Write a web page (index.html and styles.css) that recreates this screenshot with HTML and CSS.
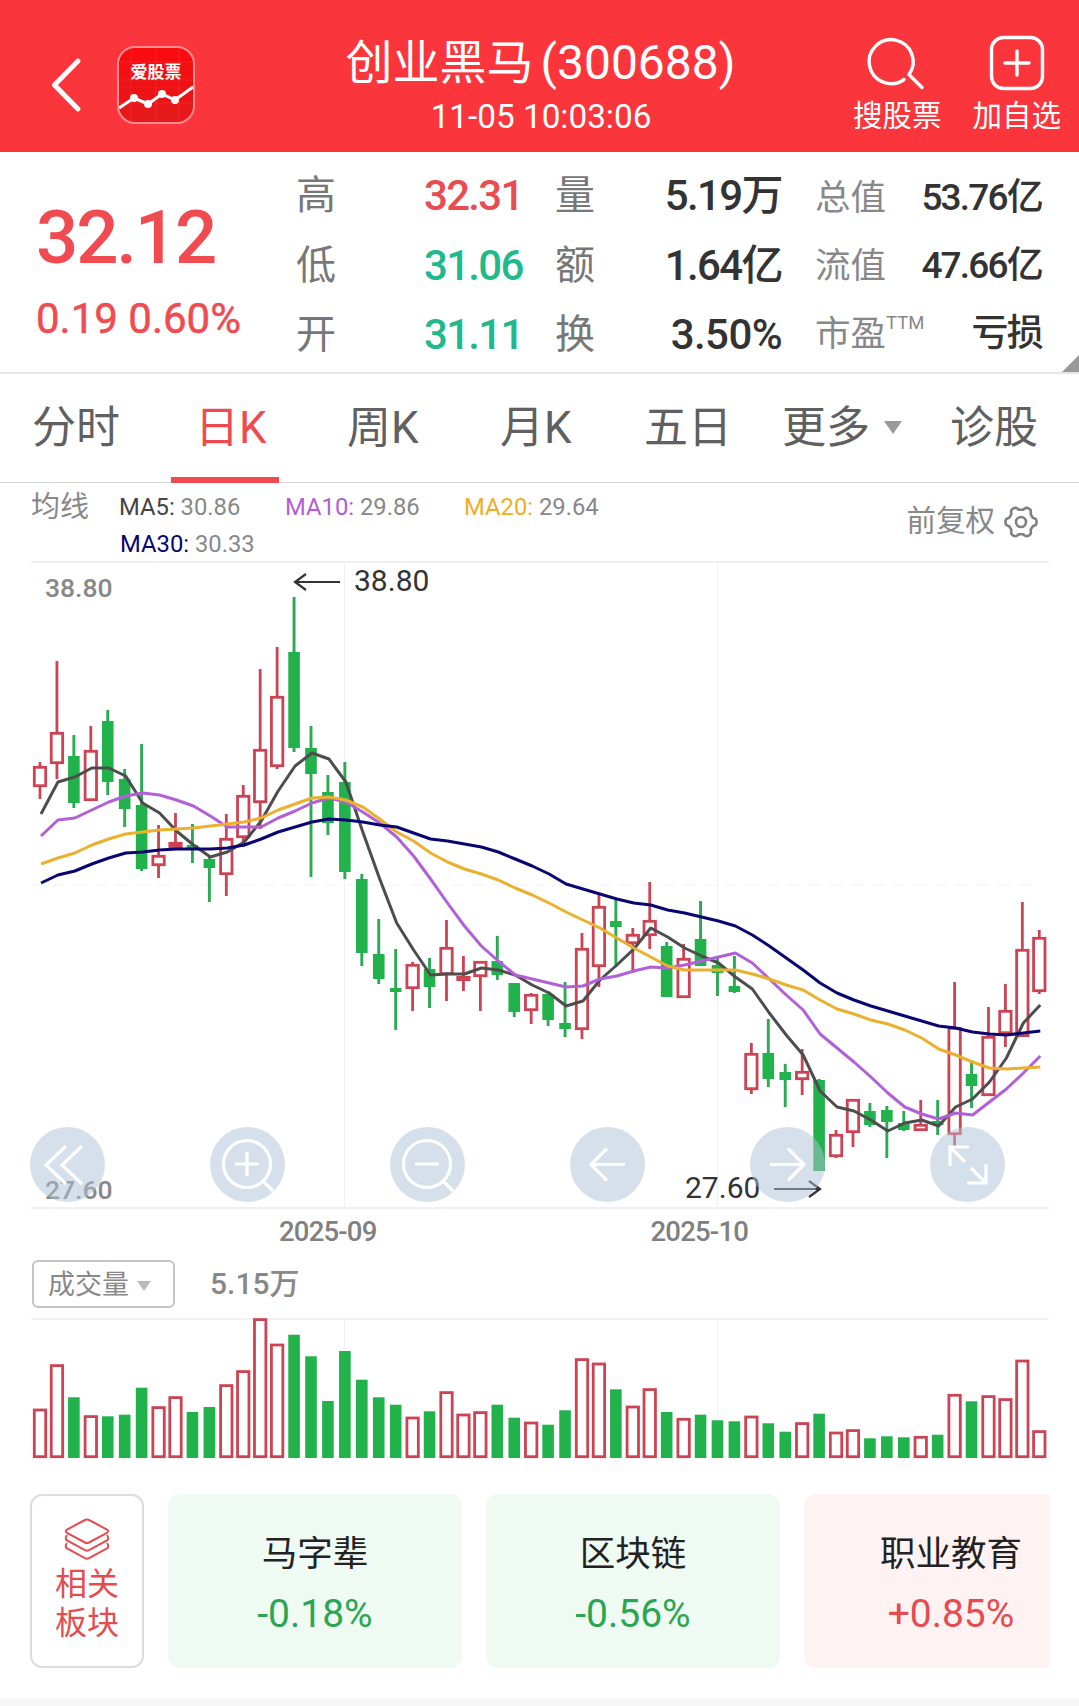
FILE: index.html
```html
<!DOCTYPE html>
<html lang="zh-CN">
<head>
  <meta charset="UTF-8">
  <meta name="viewport" content="width=device-width, initial-scale=1.0">
  <title>创业黑马(300688)</title>
  <link rel="stylesheet" href="styles.css">
</head>
<body>
  <header class="topbar">
    <div class="topbar-left">
      <svg class="back" width="30" height="56" viewBox="0 0 30 56"><path d="M26 4 L2.500 28 L26 52"/></svg>
      <div class="logo">
        <span>爱股票</span>
        <svg viewBox="0 0 74 74">
          <g class="logo-grid"><path d="M12 0V74M37 0V74M60 0V74M0 14H74M0 32H74M0 55H74"/></g>
          <path class="logo-line" d="M0 60 L15 50 L29 56 L43 46 L56 52 L74 39"/>
          <circle cx="15" cy="50" r="4"/><circle cx="29" cy="56" r="4"/><circle cx="43" cy="46" r="4"/><circle cx="56" cy="52" r="4"/>
        </svg>
      </div>
    </div>
    <div class="title">
      <h1>创业黑马<span>(300688)</span></h1>
      <p>11-05 10:03:06</p>
    </div>
    <div class="topbar-right">
      <a class="action">
        <svg width="56" height="56" viewBox="0 0 56 56"><path d="M35 44.500 A22 22 0 1 1 40 39.500 L53 52.500"/></svg>
        <span>搜股票</span>
      </a>
      <a class="action">
        <svg width="56" height="56" viewBox="0 0 56 56"><rect x="2.500" y="2.500" width="51" height="51" rx="12"/><path d="M28 16V40M16 28H40"/></svg>
        <span>加自选</span>
      </a>
    </div>
  </header>

  <section class="quote">
    <div class="price">
      <div class="last">32.12</div>
      <div class="change">0.19 0.60%</div>
    </div>
    <dl class="col col-a">
      <dt>高</dt><dd class="up">32.31</dd>
      <dt>低</dt><dd class="down">31.06</dd>
      <dt>开</dt><dd class="down">31.11</dd>
    </dl>
    <dl class="col col-b">
      <dt>量</dt><dd>5.19万</dd>
      <dt>额</dt><dd>1.64亿</dd>
      <dt>换</dt><dd class="wide">3.50%</dd>
    </dl>
    <dl class="col col-c">
      <dt>总值</dt><dd>53.76亿</dd>
      <dt>流值</dt><dd>47.66亿</dd>
      <dt>市盈<sup>TTM</sup></dt><dd>亏损</dd>
    </dl>
    <i class="corner"></i>
  </section>

  <nav class="tabs">
    <a>分时</a>
    <a class="active">日K</a>
    <a>周K</a>
    <a>月K</a>
    <a>五日</a>
    <a>更多<i class="caret"></i></a>
    <a>诊股</a>
  </nav>

  <section class="legend">
    <span class="legend-name">均线</span>
    <div class="ma-list">
      <span class="ma5"><b>MA5:</b> 30.86</span>
      <span class="ma10"><b>MA10:</b> 29.86</span>
      <span class="ma20"><b>MA20:</b> 29.64</span>
      <span class="ma30"><b>MA30:</b> 30.33</span>
    </div>
    <div class="adjust">
      <span>前复权</span>
      <svg width="34" height="34" viewBox="0 0 34 34">
        <path id="gear"/>
        <circle cx="17" cy="17" r="5"/>
      </svg>
    </div>
  </section>

  <section class="kline">
    <svg id="kline" width="1019" height="649" viewBox="30 561 1019 649"></svg>
    <div class="tools">
      <button><svg viewBox="0 0 75 75"><path d="M36 19 L16 38 L36 57M52 19 L32 38 L52 57"/></svg></button>
      <button><svg viewBox="0 0 75 75"><circle cx="37" cy="37" r="23.500"/><path d="M37 25V49M25 37H49M53 54 L63 64"/></svg></button>
      <button><svg viewBox="0 0 75 75"><circle cx="37" cy="37" r="23.500"/><path d="M25 37H49M53 54 L63 64"/></svg></button>
      <button><svg viewBox="0 0 75 75"><path d="M55 37.500H21M37 21.500 L21 37.500 L37 53.500"/></svg></button>
      <button><svg viewBox="0 0 75 75"><path d="M20 37.500H54M38 21.500 L54 37.500 L38 53.500"/></svg></button>
      <button><svg viewBox="0 0 75 75"><path d="M20 39V20H39M21 21 L35 35M56 37V56H37M55 55 L41 41"/></svg></button>
    </div>
  </section>
  <div class="dates"><span>2025-09</span><span>2025-10</span></div>

  <section class="volume-head">
    <div class="select">成交量<i class="caret"></i></div>
    <span>5.15万</span>
  </section>
  <svg class="volume" id="volume" width="1019" height="142" viewBox="30 0 1019 142"></svg>

  <section class="boards">
    <div class="board board-title">
      <svg width="46" height="42" viewBox="0 0 46 42">
        <path d="M21 2 Q23 1 25 2 L43 11.500 Q45.500 13 43 14.800 L25 24.500 Q23 25.500 21 24.500 L3 14.800 Q.500 13 3 11.500 Z"/>
        <path d="M3 17 Q.500 20.500 3 22.500 L21 32.200 Q23 33.200 25 32.200 L43 22.500 Q45.500 20.500 43 17"/>
        <path d="M3 25 Q.500 28.500 3 30.500 L21 40.200 Q23 41.200 25 40.200 L43 30.500 Q45.500 28.500 43 25"/>
      </svg>
      <span>相关<br>板块</span>
    </div>
    <div class="board fall"><h3>马字辈</h3><p>-0.18%</p></div>
    <div class="board fall"><h3>区块链</h3><p>-0.56%</p></div>
    <div class="board rise"><h3>职业教育</h3><p>+0.85%</p></div>
  </section>
  <footer class="strip"></footer>

  <script src="chart.js"></script>
</body>
</html>
```
FILE: styles.css
```css
* {
  box-sizing: border-box;
}

body {
  margin: 0;
  width: 1079px;
  height: 1706px;
  overflow: hidden;
  background: #fff;
  color: #333;
  font-family: Roboto, "Noto Sans CJK SC", sans-serif;
  display: flex;
  flex-direction: column;
}

h1, h3, p, dl, dd {
  margin: 0;
  font-weight: 400;
}

svg {
  display: block;
  fill: none;
}

/* top bar */
.topbar {
  height: 152px;
  flex: none;
  background: #fa353b;
  color: #fff;
  display: grid;
  grid-template-columns: 1fr auto 1fr;
}

.topbar-left {
  display: flex;
  align-items: center;
  gap: 35px;
  padding: 18px 0 0 52px;
}

.back {
  stroke: #fff;
  stroke-width: 4.8;
  stroke-linecap: round;
}

.logo {
  width: 78px;
  height: 78px;
  border: 2px solid #ff8d8f;
  border-radius: 18px;
  background: linear-gradient(#fa0a0e, #e31a1d);
  display: grid;
  overflow: hidden;
}

.logo > * {
  grid-area: 1 / 1;
}

.logo span {
  justify-self: center;
  font-size: 17px;
  font-weight: 700;
  line-height: 17px;
  padding-top: 16px;
}

.logo svg {
  width: 74px;
  height: 74px;
}

.logo circle {
  fill: #fff;
}

.logo-grid {
  stroke: #ff4a4a;
  stroke-opacity: .3;
}

.logo-line {
  stroke: #fff;
  stroke-width: 3;
}

.title {
  text-align: center;
}

.title h1 {
  font-size: 47px;
  line-height: 56px;
  padding: 35px 0 0 2px;
}

.title h1 span {
  font-size: 48px;
  margin-left: 7px;
}

.title p {
  font-size: 33.3px;
  line-height: 40px;
  padding: 6px 0 0 3px;
}

.topbar-right {
  display: flex;
  justify-content: flex-end;
  gap: 31px;
  padding: 35px 18px 0 0;
}

.action {
  display: flex;
  flex-direction: column;
  align-items: center;
  font-size: 29.5px;
  line-height: 40px;
}

.action svg {
  stroke: #fff;
  stroke-width: 3.4;
  stroke-linecap: round;
  overflow: visible;
}

.action span {
  padding-top: 5px;
}

/* quote */
.quote {
  height: 222px;
  flex: none;
  position: relative;
  border-bottom: 2px solid #e6e6e6;
  display: flex;
  padding-left: 36px;
}

.price {
  width: 260px;
  color: #f04b50;
  font-weight: 500;
  padding-top: 46px;
}

.last {
  font-size: 74.5px;
  line-height: 80px;
  letter-spacing: -2.2px;
}

.change {
  font-size: 42px;
  line-height: 50px;
  padding-top: 16px;
  font-weight: 400;
  -webkit-text-stroke: .5px;
}

.col {
  display: grid;
  grid-template-columns: auto 1fr;
  grid-auto-rows: 69.5px;
  line-height: 69.5px;
  padding-top: 9px;
}

.col dt {
  color: #777;
  font-size: 40px;
}

.col dd {
  font-size: 42px;
  font-weight: 500;
  letter-spacing: -1.2px;
  text-align: right;
  white-space: nowrap;
}

.col-a {
  width: 230px;
}

.col-a dd {
  text-align: left;
  padding-left: 88px;
  letter-spacing: -1.7px;
}

.col-b {
  width: 227px;
  margin-left: 29px;
}

.col-b dd {
  letter-spacing: -1.6px;
}

.col-b .wide {
  letter-spacing: -.6px;
}

.col-c {
  width: 227px;
  margin-left: 33px;
  grid-template-columns: 90px 1fr;
  grid-auto-rows: 68px;
  line-height: 68px;
  padding-top: 12px;
}

.col-c dt {
  font-size: 35.5px;
  color: #888;
  white-space: nowrap;
}

.col-c dd {
  font-size: 37px;
  letter-spacing: -1.8px;
}

.col-c sup {
  font-size: 18.5px;
  line-height: 0;
  vertical-align: 17px;
}

.up {
  color: #e84d52;
}

.down {
  color: #1fb98b;
}

.corner {
  position: absolute;
  right: 0;
  bottom: 0;
  border-left: 17px solid transparent;
  border-bottom: 17px solid #999;
}

/* tabs */
.tabs {
  height: 109px;
  flex: none;
  border-bottom: 1px solid #d8d8d8;
  display: grid;
  grid-template-columns: 163px 152px 153px 144px 138px 168px 1fr;
  padding-left: 32px;
  font-size: 44px;
  line-height: 109px;
  color: #606060;
}

.tabs a {
  position: relative;
}

.tabs .active {
  color: #ee4b50;
}

.tabs .active::after {
  content: "";
  position: absolute;
  left: -24px;
  bottom: 0;
  width: 108px;
  height: 6px;
  background: #ee4b50;
}

.caret {
  display: inline-block;
  border: 9px solid transparent;
  border-top: 13px solid #999;
  border-bottom: 0;
  margin-left: 14px;
  vertical-align: 9px;
}

/* moving averages */
.legend {
  height: 78px;
  flex: none;
  display: flex;
  padding: 6px 41px 0 31px;
  color: #888;
  font-size: 29px;
}

.legend-name {
  width: 88px;
  line-height: 37px;
}

.ma-list {
  width: 520px;
  display: grid;
  grid-template-columns: 166px 179px 1fr;
  grid-auto-rows: 37px;
  line-height: 37px;
  font-size: 23.8px;
}

.ma-list b {
  font-weight: 400;
}

.ma5 b { color: #444; }
.ma10 b { color: #b25fd6; }
.ma20 b { color: #efae26; }
.ma30 { padding-left: 1px; }
.ma30 b { color: #0a0570; }

.adjust {
  margin-left: auto;
  display: flex;
  align-items: center;
  gap: 9px;
  height: 66px;
}

.adjust span {
  font-size: 29.5px;
  line-height: 34px;
  padding-bottom: 2px;
}

.adjust svg {
  stroke: #808080;
  stroke-width: 2.6;
  stroke-linejoin: round;
}

/* charts */
.kline {
  position: relative;
  height: 649px;
  flex: none;
  margin-left: 30px;
}

.kline text {
  font-size: 26.5px;
  font-weight: 500;
  fill: #888;
}

.kline .mark {
  font-size: 30px;
  font-weight: 400;
  fill: #333;
}

.grid { stroke: #ececec; stroke-width: 1.5; }
.grid-v { stroke: #f1f1f1; }
.grid-mid { stroke: #f1f1f1; stroke-dasharray: 12 9; }
.arrow { stroke: #333; stroke-width: 2.2; }
.red { stroke: #cc4354; stroke-width: 2.8; }
.red.full { fill: #dd3048; }
.green { fill: #22b24c; }
.wick-g { stroke: #2ba953; stroke-width: 2.9; }
.line { stroke-width: 3; stroke-linejoin: round; }
.l5 { stroke: #4d4d4d; }
.l10 { stroke: #b160d8; }
.l20 { stroke: #ebb02d; }
.l30 { stroke: #0a0570; }

.tools {
  position: absolute;
  left: 0;
  top: 566px;
  display: flex;
  gap: 105px;
}

.tools button {
  width: 75px;
  height: 75px;
  padding: 0;
  border: 0;
  border-radius: 50%;
  background: rgba(171, 193, 215, .5);
}

.tools svg {
  stroke: #fff;
  stroke-width: 3.2;
}

.dates {
  height: 50px;
  flex: none;
  display: flex;
  gap: 274px;
  padding-left: 279px;
  font-size: 27.5px;
  letter-spacing: -.8px;
  line-height: 43px;
  font-weight: 500;
  color: #808080;
}

.volume-head {
  height: 58px;
  flex: none;
  display: flex;
  gap: 35px;
  padding-left: 32px;
  font-size: 30px;
  line-height: 47px;
  font-weight: 500;
  color: #888;
}

.select {
  width: 143px;
  height: 48px;
  border: 2px solid #c4c4c4;
  border-radius: 6px;
  padding-left: 14px;
  font-size: 27px;
  font-weight: 400;
}

.select .caret {
  border-width: 10px 7.5px 0;
  border-top-color: #bbb;
  margin-left: 8px;
  vertical-align: 3px;
}

.volume {
  flex: none;
  margin-left: 30px;
}

/* related boards */
.boards {
  display: flex;
  flex: none;
  gap: 24px;
  margin: 34px 30px 0 30px;
  height: 174px;
  overflow: hidden;
}

.board {
  width: 294px;
  flex: none;
  border-radius: 12px;
  text-align: center;
}

.board h3 {
  font-size: 35.5px;
  line-height: 50px;
  padding-top: 35px;
  color: #222;
}

.board p {
  font-size: 39px;
  line-height: 50px;
  padding-top: 10px;
}

.board-title {
  width: 114px;
  border: 2px solid #ddd;
  color: #e34d50;
  font-size: 32px;
  line-height: 39px;
  display: flex;
  flex-direction: column;
  align-items: center;
  padding-top: 22px;
  gap: 5px;
}

.board-title svg {
  stroke: #e34d50;
  stroke-width: 2;
}

.fall { background: #eefaf2; }
.fall p { color: #2aa653; }
.rise { background: #fff2f2; }
.rise p { color: #e54b50; }

.strip {
  margin-top: auto;
  height: 8px;
  background: #f7f7f7;
}
```
FILE: chart.js
```js
// [up, high, body top, body bottom, low]
const candles = [
  [1, 762, 766, 787, 799], [1, 661, 732, 764, 779], [0, 735, 756, 803, 808], [1, 726, 750, 801, 801],
  [0, 710, 721, 782, 795], [0, 769, 779, 809, 827], [0, 744, 805, 869, 871], [1, 825, 855, 866, 878],
  [1, 813, 842, 848, 848], [0, 824, 845, 849, 863], [0, 857, 859, 868, 902], [1, 814, 838, 875, 896],
  [1, 785, 795, 838, 847], [1, 669, 749, 803, 829], [1, 647, 696, 767, 769], [0, 597, 652, 748, 752],
  [0, 726, 748, 774, 877], [0, 775, 792, 823, 835], [0, 762, 782, 872, 879], [0, 874, 879, 953, 966],
  [0, 919, 954, 979, 984], [0, 949, 988, 992, 1030], [1, 962, 964, 989, 1011], [0, 958, 969, 987, 1008],
  [1, 920, 947, 975, 1001], [1, 956, 976, 981, 991], [1, 961, 961, 977, 1011], [0, 936, 961, 975, 980],
  [0, 983, 983, 1012, 1017], [1, 993, 994, 1011, 1024], [0, 991, 994, 1020, 1026], [0, 982, 1023, 1029, 1037],
  [1, 933, 948, 1030, 1039], [1, 895, 906, 967, 987], [0, 900, 921, 927, 967], [1, 928, 934, 944, 973],
  [1, 882, 920, 936, 949], [0, 942, 946, 997, 997], [1, 944, 958, 998, 998], [0, 901, 939, 966, 966],
  [0, 957, 965, 973, 996], [0, 956, 986, 992, 993], [1, 1043, 1053, 1090, 1094], [0, 1019, 1053, 1079, 1087],
  [0, 1064, 1072, 1080, 1107], [1, 1049, 1071, 1080, 1095], [0, 1079, 1080, 1171, 1171], [1, 1130, 1134, 1157, 1158],
  [1, 1099, 1099, 1133, 1147], [0, 1103, 1111, 1125, 1127], [0, 1106, 1110, 1122, 1158], [0, 1111, 1123, 1130, 1131],
  [1, 1100, 1124, 1131, 1131], [0, 1100, 1121, 1125, 1135], [1, 982, 1027, 1135, 1146], [0, 1060, 1074, 1086, 1108],
  [1, 1007, 1036, 1096, 1096], [1, 984, 1010, 1034, 1047], [1, 902, 949, 1037, 1037], [1, 930, 937, 992, 994]
];

const averages = {
  l5: [814, 782, 777, 768, 768, 776, 803, 813, 831, 845, 857, 852, 842, 821, 791, 766, 753, 759, 782, 832, 879, 923, 950, 975, 974, 974, 968, 970, 975, 985, 993, 1006, 1001, 980, 965, 949, 928, 937, 948, 956, 963, 977, 989, 1013, 1035, 1055, 1091, 1107, 1111, 1120, 1131, 1123, 1120, 1126, 1107, 1099, 1082, 1058, 1023, 1005],
  l10: [836, 820, 818, 810, 802, 796, 793, 795, 800, 806, 816, 827, 827, 827, 818, 811, 803, 798, 802, 812, 823, 837, 856, 879, 903, 926, 946, 961, 975, 979, 983, 987, 986, 979, 976, 971, 967, 968, 965, 961, 957, 953, 963, 979, 995, 1010, 1034, 1048, 1062, 1077, 1093, 1107, 1114, 1119, 1113, 1115, 1102, 1089, 1073, 1056],
  l20: [864, 858, 853, 845, 839, 834, 832, 830, 829, 828, 826, 824, 822, 818, 810, 804, 798, 797, 800, 807, 819, 832, 841, 853, 862, 869, 874, 880, 888, 895, 903, 912, 920, 928, 938, 948, 957, 966, 970, 970, 970, 970, 974, 979, 985, 990, 1000, 1009, 1014, 1020, 1024, 1030, 1038, 1049, 1055, 1062, 1068, 1069, 1068, 1067],
  l30: [883, 875, 871, 864, 858, 853, 852, 850, 849, 849, 849, 848, 845, 839, 832, 827, 822, 819, 820, 822, 825, 827, 833, 839, 841, 844, 847, 852, 859, 866, 874, 884, 889, 894, 899, 903, 905, 910, 913, 917, 921, 926, 935, 946, 958, 970, 983, 993, 1000, 1006, 1011, 1016, 1021, 1026, 1028, 1032, 1034, 1035, 1033, 1031]
};

const volumes = [49.3, 93.7, 60.7, 42.7, 41.7, 43.3, 70.3, 51.7, 61.7, 46, 51, 73.7, 87.7, 139.7, 114.3, 123.3, 101.7, 57, 107, 78.3, 60.7, 53.3, 41.3, 46.7, 66.7, 44.3, 46.7, 53.3, 40.3, 36.3, 33.3, 47.7, 99.7, 95.3, 68.7, 52.3, 69.7, 46, 40, 43.3, 37.7, 36.7, 42.3, 34.7, 26.3, 35.7, 44.3, 26.3, 28.7, 19.7, 21.7, 20.7, 22, 23.3, 64, 56.7, 62.7, 59.7, 98.3, 27.7];

const xAt = i => 40 + i * 16.937;

function bar(x, top, bottom, up) {
  if (!up) return `<rect class="green" x="${x - 5.8}" y="${top}" width="11.6" height="${bottom - top}"/>`;
  const full = bottom - top < 7 ? ' full' : '';
  return `<rect class="red${full}" x="${x - 5.7}" y="${top + 1.3}" width="11.4" height="${Math.max(bottom - top - 2.6, 1)}"/>`;
}

// price chart
let out = '<path class="grid" d="M31 562H1049M31 1208H1049"/>' +
  '<path class="grid-v" d="M344.500 562V1208M717.500 562V1208"/>' +
  '<path class="grid-mid" d="M32 885H1040"/>' +
  '<text x="45" y="597">38.80</text><text x="45" y="1199">27.60</text>';
candles.forEach(([up, high, top, bottom, low], i) => {
  const x = xAt(i);
  out += `<path class="${up ? 'red' : 'wick-g'}" d="M${x} ${high}V${top}M${x} ${bottom}V${low}"/>`;
  out += bar(x, top, bottom, up);
});
for (const name in averages) {
  const pts = averages[name].map((y, i) => `${xAt(i) + 1},${y}`).join(' ');
  out += `<polyline class="line ${name}" points="${pts}"/>`;
}
out += '<path class="arrow" d="M340 582H295M306 574L295 582L306 590"/><text class="mark" x="354" y="591">38.80</text>' +
  '<path class="arrow" d="M774 1189H820M809 1181L820 1189L809 1197"/><text class="mark" x="685" y="1197.500">27.60</text>';
document.getElementById('kline').innerHTML = out;

// volume chart
let vol = '<path class="grid" d="M31 1H1049"/><path class="grid-v" d="M344.500 1V140M717.500 1V140"/>';
volumes.forEach((v, i) => {
  vol += bar(xAt(i), 140 - v, 140, candles[i][0]);
});
document.getElementById('volume').innerHTML = vol;

// six-tooth settings gear
let gear = '';
for (let a = 0; a <= 360; a += 5) {
  const r = 13.9 + 1.7 * Math.tanh(2 * Math.cos(a * 6 * Math.PI / 180));
  const t = a * Math.PI / 180;
  gear += `${a ? 'L' : 'M'}${(17 + r * Math.cos(t)).toFixed(1)} ${(17 + r * Math.sin(t)).toFixed(1)}`;
}
document.getElementById('gear').setAttribute('d', gear + 'Z');
```
